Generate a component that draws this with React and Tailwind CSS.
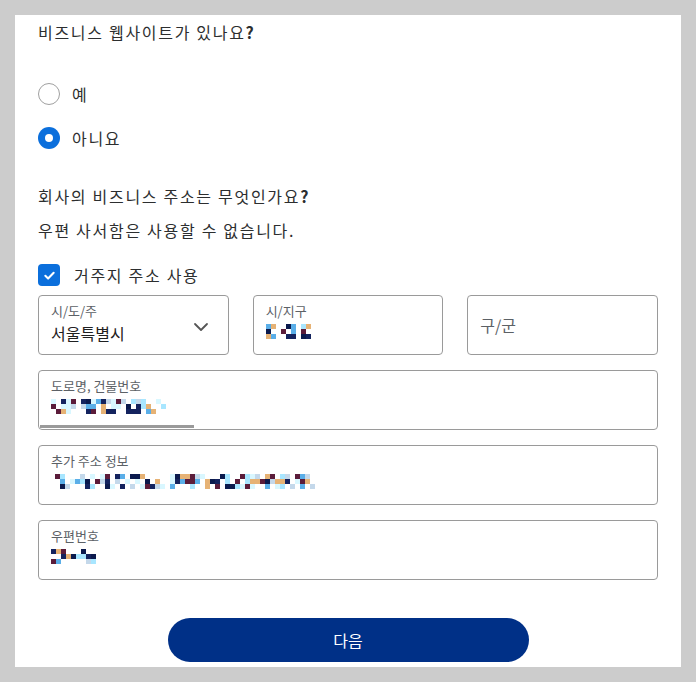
import React from 'react'

const palette = ['#ffffff', '#ffffff', '#ffffff', '#ffffff', '#d9f7ff', '#0b1a4d', '#5aaee8', '#e6b275', '#5b1c3a', '#c4d8ea', '#ffffff', '#a8e6ff', '#14235e']

function Mosaic({ width, rows = 3, seed = 1 }) {
  const cell = 5
  const cols = Math.round(width / cell)
  let s = seed
  const rand = () => {
    s = (s * 9301 + 49297) % 233280
    return s / 233280
  }
  const cells = []
  for (let r = 0; r < rows; r++) {
    for (let c = 0; c < cols; c++) {
      cells.push(palette[Math.floor(rand() * palette.length)])
    }
  }
  return (
    <div className="grid" style={{ gridTemplateColumns: `repeat(${cols}, ${cell}px)`, gridAutoRows: `${cell}px` }}>
      {cells.map((c, i) => (
        <div key={i} style={{ background: c }} />
      ))}
    </div>
  )
}

function Field({ label, children, className = '' }) {
  return (
    <div className={`relative h-[60px] border border-[#9a9a9a] rounded-[4px] px-3 pt-[6px] ${className}`}>
      <div className="text-[13px] leading-[18px] text-[#5c6166]">{label}</div>
      <div className="mt-[4px]">{children}</div>
    </div>
  )
}

export default function App() {
  return (
    <div className="min-h-[682px] bg-[#cccccc] pt-[15px] pl-[15px] pr-[15px]" style={{ fontFamily: '"Noto Sans CJK KR", "Noto Sans", sans-serif' }}>
      <div className="w-[666px] h-[652px] bg-white px-[23px] text-[#2c2e2f]">
        <h2 className="text-[16px] leading-[22px] pt-[6px] tracking-[1.7px]">
          비즈니스 웹사이트가 있나요<span className="font-bold">?</span>
        </h2>

        {/* radio group */}
        <div className="mt-[40px] flex flex-col gap-[22px] tracking-[1.7px]">
          <label className="flex items-center gap-[12px] h-[22px]">
            <span className="w-[22px] h-[22px] rounded-full border border-[#a0a0a0] bg-white" />
            <span className="text-[16px]">예</span>
          </label>
          <label className="flex items-center gap-[12px] h-[22px]">
            <span className="w-[22px] h-[22px] rounded-full bg-[#0b6fdc] flex items-center justify-center">
              <span className="w-[8px] h-[8px] rounded-full bg-white" />
            </span>
            <span className="text-[16px]">아니요</span>
          </label>
        </div>

        <p className="mt-[36px] text-[16px] leading-[22px] tracking-[1.7px]">
          회사의 비즈니스 주소는 무엇인가요<span className="font-bold">?</span>
        </p>
        <p className="mt-[12px] text-[16px] leading-[22px] tracking-[1.7px]">우편 사서함은 사용할 수 없습니다.</p>

        <label className="mt-[23px] flex items-center gap-[14px] h-[22px]">
          <span className="w-[22px] h-[22px] rounded-[4px] bg-[#0b6fdc] flex items-center justify-center">
            <svg width="13" height="13" viewBox="0 0 14 14" fill="none">
              <path d="M2.5 7.3l3 3 6-6.3" stroke="white" strokeWidth="2.2" strokeLinecap="round" strokeLinejoin="round" />
            </svg>
          </span>
          <span className="text-[16px] tracking-[1.7px]">거주지 주소 사용</span>
        </label>

        <div className="mt-[9px] grid grid-cols-3 gap-[24px]">
          <Field label="시/도/주">
            <div className="flex items-center justify-between">
              <span className="text-[16px] leading-[22px] text-[#1f2021] -mt-[2px]">서울특별시</span>
              <svg width="18" height="18" viewBox="0 0 18 18" className="mr-[6px] -mt-[14px]" fill="none">
                <path d="M3 6l6 6 6-6" stroke="#555" strokeWidth="1.8" strokeLinecap="round" strokeLinejoin="round" />
              </svg>
            </div>
          </Field>
          <Field label="시/지구">
            <Mosaic width={45} seed={7} />
          </Field>
          <div className="h-[60px] border border-[#9a9a9a] rounded-[4px] px-3 flex items-center">
            <span className="text-[16px] text-[#5c6166]">구/군</span>
          </div>
        </div>

        <div className="mt-[15px] flex flex-col gap-[15px]">
          <Field label="도로명, 건물번호" className="overflow-hidden">
            <Mosaic width={115} seed={3} />
            <div className="absolute left-[1px] bottom-[1px] w-[154px] h-[3px] bg-[#9a9a9a]" />
          </Field>
          <Field label="추가 주소 정보">
            <div className="pl-[4px]">
              <Mosaic width={260} seed={11} />
            </div>
          </Field>
          <Field label="우편번호">
            <Mosaic width={45} seed={19} />
          </Field>
        </div>

        <div className="mt-[38px] flex justify-center">
          <button className="w-[361px] h-[44px] rounded-full bg-[#003087] text-white text-[16px]">다음</button>
        </div>
      </div>
    </div>
  )
}
